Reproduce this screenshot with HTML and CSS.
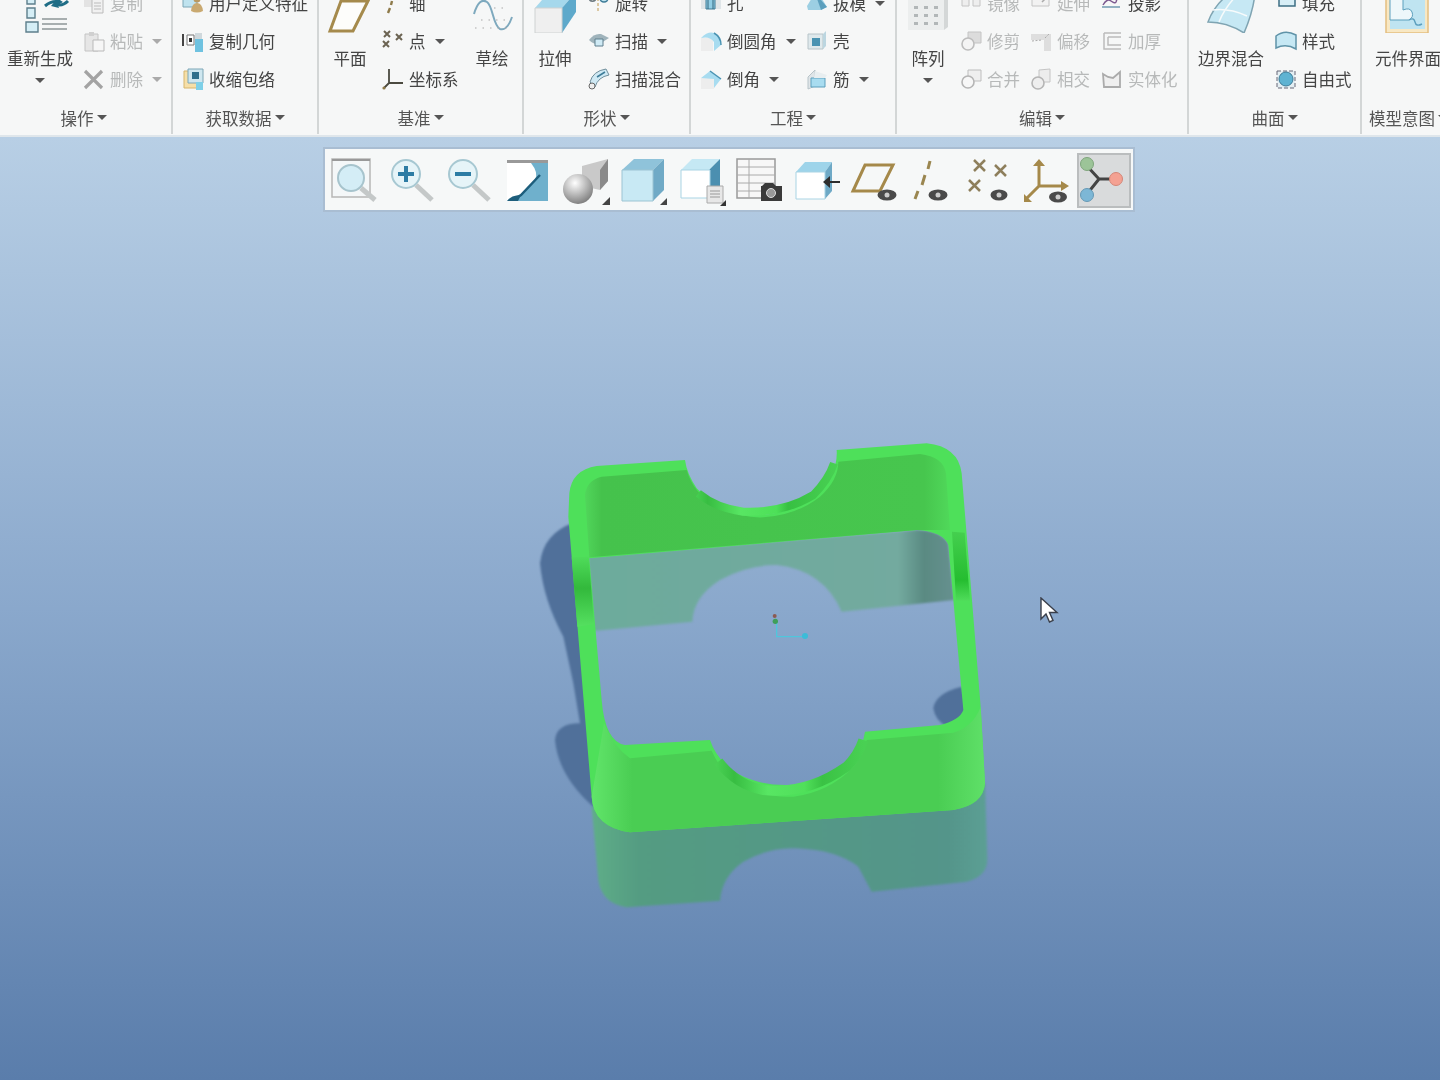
FILE: index.html
```html
<!DOCTYPE html>
<html lang="zh">
	<head>
		<meta charset="UTF-8">
		<title>Creo</title>
		<link rel="stylesheet" href="styles.css">
	</head>
	<body>
		<div class="ribbon">
			<!-- 操作 -->
			<section class="group g-ops">
				<div class="body">
					<div class="big">
						<svg class="big-icon" viewBox="0 0 66 47"><path d="M38 20q7-6 15-4M61 15q-6 6-13 3" fill="none" stroke="#1f6d86" stroke-width="3"/><path d="M48 11l8 5-7 4zM52 22l-8-2 5-6z" fill="#1f6d86"/><path d="M20 11h8v7h-8zM20 22h8v10h-8zM19 36h12v10H19z" fill="#d5eef6" stroke="#5d7f8c" stroke-width="1.400"/><path d="M35 33h25M35 38h25M35 43h25" stroke="#8d9698" stroke-width="1.600"/></svg>
						<span class="big-label">重新生成</span>
						<i class="arrow"></i>
					</div>
					<div class="col">
						<div class="item off"><svg class="ic" viewBox="0 0 22 22"><path d="M1 2h9v13H1z" fill="#e3e3e3"/><path d="M9 7h11v14H9z" fill="#f1f1f1" stroke="#bbb"/><path d="M11 11h7M11 14h7M11 17h7" stroke="#bbb"/></svg><span>复制</span></div>
						<div class="item off"><svg class="ic" viewBox="0 0 22 22"><path d="M2 4h13v17H2z" fill="#e6e6e6" stroke="#c4c4c4"/><path d="M6 2h5v4H6z" fill="#d0d0d0"/><path d="M10 10h11v11H10z" fill="#f6f6f6" stroke="#b9b9b9"/></svg><span>粘贴</span><i class="arrow"></i></div>
						<div class="item off"><svg class="ic" viewBox="0 0 22 22"><path d="M2 3l17 17M19 3L2 20" stroke="#a3a3a3" stroke-width="3.200"/></svg><span>删除</span><i class="arrow"></i></div>
					</div>
				</div>
				<div class="label">操作<i class="arrow"></i></div>
			</section>

			<!-- 获取数据 -->
			<section class="group g-data">
				<div class="body">
					<div class="col">
						<div class="item"><svg class="ic" viewBox="0 0 22 22"><path d="M1 6h14v9H1z" fill="#bfe3ef" stroke="#7da6b6"/><circle cx="15" cy="7" r="3.500" fill="#b99a62"/><path d="M9 19q1-8 6-8t6 8q-6 3-12 0z" fill="#c9a970"/></svg><span>用户定义特征</span></div>
						<div class="item"><svg class="ic" viewBox="0 0 22 22"><path d="M1 4v12" stroke="#444" stroke-width="2"/><path d="M5 5h7v10H5z" fill="#fff" stroke="#777"/><path d="M7 8h3v4H7z" fill="#333"/><path d="M13 3h7v6h-7z" fill="#cfd8dc"/><path d="M13 9h8v13h-8z" fill="#6fc2e0"/></svg><span>复制几何</span></div>
						<div class="item"><svg class="ic" viewBox="0 0 22 22"><path d="M2 3h14v17H2z" fill="#f6dfa8" stroke="#d6b56d"/><path d="M6 1h15v14H6z" fill="#cfe7f0" stroke="#7da6b6"/><path d="M10 4h7v7h-7z" fill="#2f6f8c"/><path d="M14 14h7v8h-7z" fill="#7ed0e8"/></svg><span>收缩包络</span></div>
					</div>
				</div>
				<div class="label">获取数据<i class="arrow"></i></div>
			</section>

			<!-- 基准 -->
			<section class="group g-datum">
				<div class="body">
					<div class="big">
						<svg class="big-icon" viewBox="0 0 62 47"><path d="M11 45L22 15H49L34 45z" fill="#fdfdfb" stroke="#a58a4c" stroke-width="3"/></svg>
						<span class="big-label">平面</span>
					</div>
					<div class="col">
						<div class="item"><svg class="ic" viewBox="0 0 22 22"><path d="M14 1l-2 5M10 9l-1 4M8 16l-2 5" stroke="#8e7a4a" stroke-width="2.400"/></svg><span>轴</span></div>
						<div class="item"><svg class="ic" viewBox="0 0 22 22"><path d="M2 1l6 6M8 1L2 7M14 4l6 6M20 4l-6 6M1 11l6 6M7 11l-6 6" stroke="#6b6352" stroke-width="2"/></svg><span>点</span><i class="arrow"></i></div>
						<div class="item"><svg class="ic" viewBox="0 0 22 22"><path d="M7 1v14M7 15h14M7 15l-5 5" stroke="#4b4a40" stroke-width="1.800" fill="none"/><circle cx="2" cy="20" r="1.600" fill="#8e7a4a"/></svg><span>坐标系</span></div>
					</div>
					<div class="big">
						<svg class="big-icon" viewBox="0 0 62 47"><path d="M13 28q5-17 13-12c6 4 6 24 13 27 6 2 10-6 12-12" fill="none" stroke="#7ea9be" stroke-width="2"/><path d="M14 42h36M20 34h28M33 22h12" stroke="#a9a9a9" stroke-width="1.200" stroke-dasharray="1.500 6"/></svg>
						<span class="big-label">草绘</span>
					</div>
				</div>
				<div class="label">基准<i class="arrow"></i></div>
			</section>

			<!-- 形状 -->
			<section class="group g-shape">
				<div class="body">
					<div class="big">
						<svg class="big-icon" viewBox="0 0 62 47"><path d="M11 22L25 6h27L38 22z" fill="#a5d8ec"/><path d="M38 22L52 6v20L38 47z" fill="#5ea9cb"/><path d="M11 22h27v25H11z" fill="#efefef" stroke="#cfd2d2"/></svg>
						<span class="big-label">拉伸</span>
					</div>
					<div class="col">
						<div class="item"><svg class="ic" viewBox="0 0 22 22"><circle cx="4.500" cy="6" r="3.200" fill="none" stroke="#6e7a80" stroke-width="1.600"/><circle cx="16" cy="6" r="4" fill="#bfe3ef" stroke="#3e7c98" stroke-width="1.600"/><path d="M10 1v18" stroke="#c09a50" stroke-dasharray="3 2"/></svg><span>旋转</span></div>
						<div class="item"><svg class="ic" viewBox="0 0 22 22"><path d="M1 10q5-7 12-6l8 4-8 5q-6 3-12-3z" fill="#9fb3bb"/><path d="M7 9h8v7H7z" fill="#cfeaf5" stroke="#5f7f8d"/></svg><span>扫描</span><i class="arrow"></i></div>
						<div class="item"><svg class="ic" viewBox="0 0 22 22"><path d="M2 14Q5 3 18 1l3 6Q10 9 7 19z" fill="#cfe9f4" stroke="#6f8d9a"/><circle cx="4" cy="18" r="3" fill="#eee" stroke="#666"/><path d="M9 9l8-5" stroke="#3e7c98" stroke-width="1.500"/></svg><span>扫描混合</span></div>
					</div>
				</div>
				<div class="label">形状<i class="arrow"></i></div>
			</section>

			<!-- 工程 -->
			<section class="group g-eng">
				<div class="body">
					<div class="col">
						<div class="item"><svg class="ic" viewBox="0 0 22 22"><path d="M1 3h20v14H1z" fill="#dfe5e8"/><path d="M6 3h9v14H6z" fill="#8fcde5" stroke="#3e7c98"/><path d="M8 3v14M13 3v14" stroke="#34667c"/></svg><span>孔</span></div>
						<div class="item"><svg class="ic" viewBox="0 0 22 22"><path d="M1 8h12v13H1z" fill="#ededed"/><path d="M1 8Q8 1 14 3q7 4 7 12l-7 6V12Q10 6 1 8z" fill="#a8dcf0"/><path d="M14 3q7 4 7 12" fill="none" stroke="#4a93b2" stroke-width="1.500"/></svg><span>倒圆角</span><i class="arrow"></i></div>
						<div class="item"><svg class="ic" viewBox="0 0 22 22"><path d="M1 10h13v11H1z" fill="#ededed"/><path d="M1 10l9-7 11 8-7 9v-9z" fill="#a8dcf0"/><path d="M10 3l11 8" stroke="#4a93b2" stroke-width="1.500"/></svg><span>倒角</span><i class="arrow"></i></div>
					</div>
					<div class="col">
						<div class="item"><svg class="ic" viewBox="0 0 22 22"><path d="M1 14L9 1l4 1 8 13-6 3H2z" fill="#9ccfe3"/><path d="M9 1l12 14-6 3z" fill="#5c9fbd"/></svg><span>拔模</span><i class="arrow"></i></div>
						<div class="item"><svg class="ic" viewBox="0 0 22 22"><path d="M2 4h15v15H2z" fill="#dfe9ec" stroke="#b8c4c9"/><path d="M6 8h8v8H6z" fill="#4a93b2"/><path d="M17 4l3-3v15l-3 3z" fill="#bcd6e0"/></svg><span>壳</span></div>
						<div class="item"><svg class="ic" viewBox="0 0 22 22"><path d="M2 9L9 2v16l-7 3z" fill="#dfe5e8" stroke="#b8c4c9"/><path d="M5 10h14v9H5z" fill="#a8dcf0" stroke="#5c9fbd"/><path d="M9 3l12 4-2 3H8z" fill="#e8eef0"/></svg><span>筋</span><i class="arrow"></i></div>
					</div>
				</div>
				<div class="label">工程<i class="arrow"></i></div>
			</section>

			<!-- 编辑 -->
			<section class="group g-edit">
				<div class="body">
					<div class="big">
						<svg class="big-icon" viewBox="0 0 62 47"><path d="M11 3h36v41H11z" fill="#eceeee"/><path d="M47 3l4-3v41l-4 3z" fill="#d4d7d7"/><path d="M17 20h4v3h-4zM27 20h4v3h-4zM37 20h4v3h-4zM17 28h4v3h-4zM27 28h4v3h-4zM37 28h4v3h-4zM17 36h4v3h-4zM27 36h4v3h-4zM37 36h4v3h-4z" fill="#b2b7b8"/></svg>
						<span class="big-label">阵列</span>
						<i class="arrow"></i>
					</div>
					<div class="col">
						<div class="item off"><svg class="ic" viewBox="0 0 22 22"><path d="M2 1h7v13H2zM13 1h7v13h-7z" fill="#eee" stroke="#c4c4c4"/></svg><span>镜像</span></div>
						<div class="item off"><svg class="ic" viewBox="0 0 22 22"><path d="M8 2h13v11H8z" fill="#dcdcdc" stroke="#c4c4c4"/><circle cx="8" cy="14" r="6" fill="#f4f4f4" stroke="#bdbdbd" stroke-width="1.600"/></svg><span>修剪</span></div>
						<div class="item off"><svg class="ic" viewBox="0 0 22 22"><path d="M8 2h13v11H8z" fill="#efefef" stroke="#bdbdbd"/><circle cx="8" cy="14" r="6" fill="#f7f7f7" stroke="#b5b5b5" stroke-width="1.600"/></svg><span>合并</span></div>
					</div>
					<div class="col">
						<div class="item off"><svg class="ic" viewBox="0 0 22 22"><path d="M2 1h17v13H2z" fill="#f2f2f2" stroke="#c4c4c4"/><path d="M8 7h7M12 4l3 3-3 3" fill="none" stroke="#aaa" stroke-width="1.500"/></svg><span>延伸</span></div>
						<div class="item off"><svg class="ic" viewBox="0 0 22 22"><path d="M1 4h20v17h-7V10H1z" fill="#dedede"/><path d="M2 11l10-1M15 8l4-4" stroke="#aaa" stroke-dasharray="2 1.500"/></svg><span>偏移</span></div>
						<div class="item off"><svg class="ic" viewBox="0 0 22 22"><path d="M9 2l11-1v13H9z" fill="#ededed" stroke="#c4c4c4"/><circle cx="8" cy="15" r="6" fill="#eee" stroke="#b5b5b5" stroke-width="1.600"/></svg><span>相交</span></div>
					</div>
					<div class="col">
						<div class="item"><svg class="ic" viewBox="0 0 22 22"><path d="M2 13q4-7 8-4t5 1l2-6" fill="none" stroke="#7d5a90" stroke-width="1.500"/><path d="M1 15h18" stroke="#7a9fb5" stroke-width="1.600"/></svg><span>投影</span></div>
						<div class="item off"><svg class="ic" viewBox="0 0 22 22"><path d="M3 3h17M3 3v16h17M7 7h13M7 7v8h13" fill="none" stroke="#bcbcbc" stroke-width="1.500"/></svg><span>加厚</span></div>
						<div class="item off"><svg class="ic" viewBox="0 0 22 22"><path d="M2 6l5 3 5 1 7-6v15H3z" fill="#efefef" stroke="#ababab" stroke-width="1.800"/></svg><span>实体化</span></div>
					</div>
				</div>
				<div class="label">编辑<i class="arrow"></i></div>
			</section>

			<!-- 曲面 -->
			<section class="group g-surf">
				<div class="body">
					<div class="big">
						<svg class="big-icon" viewBox="0 0 84 47"><path d="M19 36Q24 22 36 11 50 12 66 8 64 26 55 47 38 36 19 36z" fill="#c6e8f4" stroke="#7fa4b2" stroke-width="1.500"/><path d="M30 36q5-13 17-26M24 24q16-2 34 6" fill="none" stroke="#f7fbfc" stroke-width="1.500"/></svg>
						<span class="big-label">边界混合</span>
					</div>
					<div class="col">
						<div class="item"><svg class="ic" viewBox="0 0 22 22"><path d="M4 1h16v13H4z" fill="#d7eef6" stroke="#3e6f84" stroke-width="1.500"/></svg><span>填充</span></div>
						<div class="item"><svg class="ic" viewBox="0 0 22 22"><path d="M1 18V6Q10-1 21 5v14q-10-6-20-1z" fill="#c6e8f4" stroke="#5f93a8" stroke-width="1.500"/></svg><span>样式</span></div>
						<div class="item"><svg class="ic" viewBox="0 0 22 22"><path d="M2 3h18v17H2z" fill="#e4eef2" stroke="#667" stroke-dasharray="4 2"/><circle cx="11" cy="11" r="7" fill="#5fb3d2" stroke="#3e7c98"/></svg><span>自由式</span></div>
					</div>
				</div>
				<div class="label">曲面<i class="arrow"></i></div>
			</section>

			<!-- 模型意图 -->
			<section class="group g-intent">
				<div class="body">
					<div class="big">
						<svg class="big-icon" viewBox="0 0 92 47"><path d="M24 0h42v47H24z" fill="#f8e8c4" stroke="#e3bf80" stroke-width="1.500"/><path d="M28 0h35v43H28z" fill="#bfe4f1"/><path d="M28 0h13v24q7-3 9 2t-3 8H28z" fill="#eef7fa" stroke="#5c9fbd"/><path d="M47 34q5-3 6 2t7 2" fill="none" stroke="#5c9fbd" stroke-width="1.400"/></svg>
						<span class="big-label">元件界面</span>
					</div>
				</div>
				<div class="label">模型意图<i class="arrow"></i></div>
			</section>
		</div>

		<div class="viewport">
			<svg class="scene" viewBox="0 136 1440 944">
				<defs>
					<linearGradient id="frontWall" gradientUnits="userSpaceOnUse" x1="190" y1="0" x2="1365" y2="0">
						<stop offset="0" stop-color="#60e469"/><stop offset=".1" stop-color="#4acd53"/><stop offset=".88" stop-color="#4acd53"/><stop offset="1" stop-color="#5fe068"/>
					</linearGradient>
					<linearGradient id="topArc" gradientUnits="userSpaceOnUse" x1="490" y1="0" x2="920" y2="0">
						<stop offset="0" stop-color="#4ad455"/><stop offset=".1" stop-color="#38bd42"/><stop offset=".33" stop-color="#58e663"/><stop offset=".58" stop-color="#4de058"/><stop offset=".66" stop-color="#37c042"/><stop offset="1" stop-color="#49d053"/>
					</linearGradient>
					<linearGradient id="lowArc" gradientUnits="userSpaceOnUse" x1="560" y1="0" x2="1000" y2="0">
						<stop offset="0" stop-color="#49d053"/><stop offset=".12" stop-color="#38bd42"/><stop offset=".35" stop-color="#58e663"/><stop offset=".6" stop-color="#50e05a"/><stop offset=".72" stop-color="#3ac244"/><stop offset="1" stop-color="#49d053"/>
					</linearGradient>
					<linearGradient id="band" x1="0" y1="0" x2="0" y2="1">
						<stop offset="0" stop-color="#4fdc5a"/><stop offset=".45" stop-color="#33b93c"/><stop offset="1" stop-color="#55e060"/>
					</linearGradient>
					<linearGradient id="bandRight" x1="0" y1="0" x2="0" y2="1">
						<stop offset="0" stop-color="#45cf4f"/><stop offset=".7" stop-color="#25bd30"/><stop offset="1" stop-color="#4fdc5a"/>
					</linearGradient>
					<linearGradient id="mirrorBack" gradientUnits="userSpaceOnUse" x1="170" y1="0" x2="1270" y2="0">
						<stop offset="0" stop-color="#6dab9c"/><stop offset=".85" stop-color="#73aa9f"/><stop offset=".92" stop-color="#5a8a82"/><stop offset="1" stop-color="#66908f"/>
					</linearGradient>
					<linearGradient id="mirrorFloor" gradientUnits="userSpaceOnUse" x1="185" y1="0" x2="1370" y2="0">
						<stop offset="0" stop-color="#5fae88"/><stop offset=".12" stop-color="#549c82"/><stop offset=".9" stop-color="#54958a"/><stop offset="1" stop-color="#5c9f94"/>
					</linearGradient>
					<linearGradient id="backWall" gradientUnits="userSpaceOnUse" x1="160" y1="0" x2="1260" y2="0">
						<stop offset="0" stop-color="#52d85c"/><stop offset=".05" stop-color="#45c24c"/><stop offset=".93" stop-color="#47c64e"/><stop offset="1" stop-color="#50d85a"/>
					</linearGradient>
				</defs>
				<g transform="translate(530 430) scale(.33333)">
					<g class="soft">
						<path d="M130 278Q40 310 30 400 40 510 100 620L130 760 150 880Q80 880 75 930 85 1040 195 1135L170 800Z" fill="#50709a"/>
						<path d="M1295 770Q1215 790 1210 835 1215 870 1250 890L1315 850Z" fill="#50709a"/>
					</g>
					<path class="soft" d="M185 1130L205 1350Q215 1420 290 1432L570 1412Q575 1340 640 1295 720 1250 800 1255 920 1260 985 1310L1025 1385 1310 1355Q1370 1340 1372 1290L1365 1060Z" fill="url(#mirrorFloor)"/>
					<path class="soft" d="M175 380L190 603 487 575Q490 500 570 450 650 405 740 405 880 420 935 545L1272 510 1255 340Q1230 300 1160 300Z" fill="url(#mirrorBack)"/>

					<g class="edges">
						<path fill-rule="evenodd" fill="#4ee05a" d="M465 90L200 108Q125 120 118 190L115 260 185 1100Q190 1190 300 1207L1270 1140Q1360 1125 1365 1060L1352 830 1295 130Q1285 50 1190 40L920 60Q925 130 860 190 790 250 690 255 560 240 500 175 470 130 465 90ZM178 385L215 810Q225 935 285 945L540 930Q560 990 620 1030 690 1068 780 1065 870 1060 945 1015 995 975 1005 905L1230 885Q1290 870 1300 840L1255 345Q1240 305 1160 300Z"/>
						<path fill="url(#backWall)" d="M165 195Q170 150 215 140L470 120Q490 190 560 230 640 265 700 262 800 255 870 200 925 150 925 95L1170 72Q1240 80 1248 130L1260 300 1160 300 178 382Z"/>
						<path fill="url(#frontWall)" d="M222 880Q250 950 300 985L545 962Q570 1020 620 1060 700 1105 790 1100 900 1085 970 1010 1000 975 1010 930L1270 908Q1330 890 1352 830L1365 1060Q1360 1125 1270 1140L300 1207Q190 1190 185 1100Z"/>
						<path d="M505 190Q560 235 640 245 760 250 850 195 895 150 912 100" fill="none" stroke="url(#topArc)" stroke-width="24"/>
						<path d="M565 995Q620 1065 700 1080 830 1095 950 1010 985 975 1000 930" fill="none" stroke="url(#lowArc)" stroke-width="30"/>
						<path d="M125 382L176 380 192 582 142 590Z" fill="url(#band)"/>
						<path d="M1266 305L1304 308 1320 512 1278 512Z" fill="url(#bandRight)"/>
					</g>

					<path d="M740 575V620H825" fill="none" stroke="#4fc6dc" stroke-width="4"/>
					<circle cx="825" cy="618" r="9" fill="#3cbcd8"/>
					<circle cx="736" cy="574" r="8" fill="#3f9f58"/>
					<circle cx="734" cy="558" r="6" fill="#8b5a52"/>
				</g>
			</svg>

			<div class="toolbar">
				<div class="tool"><svg viewBox="0 0 50 50"><path d="M3 3h38v38H3z" fill="#f4f7f8" stroke="#b7b7b5" stroke-width="1.500"/><path d="M3 3h38v2H3z" fill="#999"/><path d="M32 32l14 12" stroke="#c4c8c8" stroke-width="5"/><circle cx="22" cy="22" r="13" fill="#d4edf6" stroke="#a7c4cd" stroke-width="2"/></svg></div>
				<div class="tool"><svg viewBox="0 0 50 50"><path d="M29 29l16 15" stroke="#c4c8c8" stroke-width="5"/><circle cx="19" cy="18" r="14" fill="#e6f4f8" stroke="#a7c8d2" stroke-width="2"/><path d="M19 10v16M11 18h16" stroke="#2d7ca4" stroke-width="4"/></svg></div>
				<div class="tool"><svg viewBox="0 0 50 50"><path d="M29 29l16 15" stroke="#c4c8c8" stroke-width="5"/><circle cx="19" cy="18" r="14" fill="#e6f4f8" stroke="#a7c8d2" stroke-width="2"/><path d="M11 18h16" stroke="#2d7ca4" stroke-width="4"/></svg></div>
				<div class="tool"><svg viewBox="0 0 50 50"><path d="M5 4h41v41H5z" fill="#6fb0cc"/><path d="M5 4h41v3H5z" fill="#999"/><path d="M5 7h24q8 10 4 17L14 43l-9 2z" fill="#fff"/><path d="M14 42l5-3 19-20" fill="none" stroke="#1d5e7c" stroke-width="2.500"/><path d="M5 45q4-6 14-6l-3 6z" fill="#1d5e7c"/></svg></div>
				<div class="tool"><svg viewBox="0 0 50 50"><defs><radialGradient id="ball" cx=".4" cy=".3" r=".8"><stop offset="0" stop-color="#fff"/><stop offset="1" stop-color="#6f6f6f"/></radialGradient></defs><path d="M22 10L48 3v22l-8 9-18-4z" fill="#c9c9c9"/><path d="M48 3v22l-8 9V14z" fill="#8a8a8a"/><circle cx="18" cy="33" r="15" fill="url(#ball)"/><path d="M42 49h8v-8z" fill="#444"/></svg></div>
				<div class="tool"><svg viewBox="0 0 50 50"><path d="M5 14L17 3h30L36 14z" fill="#8fc3da"/><path d="M36 14L47 3v31L36 45z" fill="#70aac6"/><path d="M5 14h31v31H5z" fill="#c8e9f4" stroke="#9cc4d3"/><path d="M43 49h7v-7z" fill="#444"/></svg></div>
				<div class="tool"><svg viewBox="0 0 50 50"><path d="M6 14L17 3h28L34 14z" fill="#c5e8f4"/><path d="M34 14L45 3v30L34 42z" fill="#4b8fb0"/><path d="M6 14h29v28H6z" fill="#fff" stroke="#a9d4e4"/><path d="M32 30h16v17H32z" fill="#e7e7e7" stroke="#aaa"/><path d="M35 35h10M35 38h10M35 41h10" stroke="#999"/><path d="M45 50h6v-6z" fill="#333"/></svg></div>
				<div class="tool"><svg viewBox="0 0 50 50"><path d="M4 3h38v39H4z" fill="#f7f7f7" stroke="#999" stroke-width="1.500"/><path d="M4 11h38M4 19h38M4 27h38M4 35h38M16 3v39" stroke="#aaa"/><path d="M29 30l3-3h8l3 3h6v15H28V30z" fill="#3a3a3a"/><circle cx="38" cy="37" r="4.500" fill="#999" stroke="#ddd"/></svg></div>
				<div class="tool"><svg viewBox="0 0 50 50"><path d="M5 16L14 6h27l-7 10z" fill="#9ed4ea"/><path d="M34 16l7-10v29l-7 8z" fill="#6ea9c6"/><path d="M5 16h29v27H5z" fill="#fff" stroke="#a9d4e4"/><path d="M49 26H38" stroke="#2e2e2e" stroke-width="2"/><path d="M39 20l-7 6 7 6z" fill="#2e2e2e"/></svg></div>
				<div class="tool"><svg viewBox="0 0 50 50"><path d="M5 35L17 9h28L32 35z" fill="none" stroke="#a5894a" stroke-width="3"/><ellipse cx="39" cy="39" rx="9.500" ry="5.500" fill="#4a4a4a"/><circle cx="39" cy="39" r="2.500" fill="#ccc"/></svg></div>
				<div class="tool"><svg viewBox="0 0 50 50"><path d="M24 5l-2 8M19 19l-3 10M12 35l-3 8" stroke="#9a8650" stroke-width="3"/><ellipse cx="32" cy="39" rx="9.500" ry="5.500" fill="#4a4a4a"/><circle cx="32" cy="39" r="2.500" fill="#ccc"/></svg></div>
				<div class="tool"><svg viewBox="0 0 50 50"><path d="M10 4l11 11M21 4L10 15M31 9l11 11M42 9L31 20M5 24l11 11M16 24L5 35" stroke="#8e7f5c" stroke-width="2.500"/><ellipse cx="35" cy="39" rx="8.500" ry="5.500" fill="#4a4a4a"/><circle cx="35" cy="39" r="2.500" fill="#ccc"/></svg></div>
				<div class="tool"><svg viewBox="0 0 50 50"><path d="M18 8v22M18 30h24M18 30L6 42" stroke="#a5894a" stroke-width="3" fill="none"/><path d="M12 10l6-7 6 7zM40 25l8 5-8 5zM3 38l0 8 8 0z" fill="#a5894a"/><ellipse cx="37" cy="41" rx="9" ry="5.500" fill="#4a4a4a"/><circle cx="37" cy="41" r="2.500" fill="#ccc"/></svg></div>
				<div class="tool active"><svg viewBox="0 0 50 50"><path d="M8 10l12 13-12 15M20 23h16" fill="none" stroke="#444" stroke-width="3"/><circle cx="8" cy="8" r="6.500" fill="#9cc498" stroke="#7fa57c"/><circle cx="8" cy="39" r="6.500" fill="#7db7d6" stroke="#6699b5"/><circle cx="37" cy="23" r="6.500" fill="#f4a192" stroke="#d48677"/></svg></div>
			</div>

			<svg class="cursor" viewBox="0 0 20 28"><path d="M2 1v21l5-5 3.500 8 3.500-1.500-3.500-8H18z" fill="#fff" stroke="#3a3f4a" stroke-width="1.400"/></svg>
		</div>
	</body>
</html>
```

FILE: styles.css
```css
* {margin: 0; padding: 0; box-sizing: border-box;}
html, body {width: 1440px; height: 1080px; overflow: hidden;}
body {
	font-family: "Noto Sans CJK SC", "Noto Sans", sans-serif;
	font-size: 16.5px;
	color: #444;
	background: #f6f7f7;
	display: flex;
	flex-direction: column;
}

/* ribbon */
.ribbon {
	height: 137px;
	flex-shrink: 0;
	display: flex;
	overflow: hidden;
	background: #f6f7f7;
	border-bottom: 2px solid #dfe6eb;
}
.group {
	flex-shrink: 0;
	height: 134px;
	display: flex;
	flex-direction: column;
	border-right: 2px solid #d3d6d6;
	filter: blur(.6px);
}
.body {
	display: grid;
	height: 114px;
	margin-top: -16px;
	flex-shrink: 0;
}
.label {
	flex: 1;
	display: flex;
	align-items: center;
	justify-content: center;
	gap: 3px;
	padding-top: 3px;
	color: #555;
}
.g-ops {width: 173px;}
.g-ops .body {grid-template-columns: 80px 1fr; column-gap: 3px;}
.g-ops .label {padding-right: 4px;}
.g-data {width: 146px;}
.g-data .body {padding-left: 9px;}
.g-datum {width: 205px;}
.g-datum .body {grid-template-columns: 62px 78px 62px; column-gap: 1px;}
.g-shape {width: 167px;}
.g-shape .body {grid-template-columns: 62px 1fr; column-gap: 2px;}
.g-eng {width: 206px;}
.g-eng .body {grid-template-columns: 106px 1fr; padding-left: 9px;}
.g-edit {width: 292px;}
.g-edit .body {grid-template-columns: 62px 71px 71px 1fr;}
.g-edit .col:nth-child(2) {margin-left: 1px;}
.g-surf {width: 173px;}
.g-surf .body {grid-template-columns: 84px 1fr; column-gap: 2px;}
.g-intent {width: 92px; border-right: none;}
.g-intent .label {justify-content: flex-start; padding-left: 7px;}

.big {
	display: flex;
	flex-direction: column;
	align-items: center;
	min-width: 0;
	padding-top: 2px;
}
.big-icon {width: 100%; height: 47px; flex-shrink: 0;}
.big-label {margin-top: 13px; line-height: 24px; white-space: nowrap;}
.big .arrow {margin-top: 8px;}

.col {display: grid; grid-auto-rows: 38px;}
.item {display: flex; align-items: center; gap: 5px; white-space: nowrap;}
.item .arrow {margin-left: 4px;}
.ic {width: 22px; height: 22px; flex-shrink: 0;}
.off {color: #b7b9b9;}
.off .arrow {border-top-color: #aaa;}
.arrow {
	display: block;
	width: 0;
	height: 0;
	flex-shrink: 0;
	border-left: 5px solid transparent;
	border-right: 5px solid transparent;
	border-top: 5px solid #555;
}

/* graphics area */
.viewport {
	position: relative;
	flex: 1;
	background: linear-gradient(#b8cfe5 0, #8aa8cc 50%, #5a7dab 100%);
	overflow: hidden;
}
.scene {position: absolute; left: 0; top: -1px; width: 1440px; height: 944px;}
.soft {filter: blur(3px);}
.edges {filter: blur(.8px);}

.toolbar {
	position: absolute;
	left: 323px;
	top: 10px;
	width: 812px;
	height: 65px;
	display: flex;
	gap: 3.7px;
	padding: 4px 2px 1px 2px;
	background: #f6f8f8;
	border: 2px solid #a9bdd2;
	filter: blur(.5px);
}
.tool {
	width: 54px;
	height: 55px;
	flex-shrink: 0;
	display: flex;
	align-items: center;
	justify-content: center;
	border: 2px solid transparent;
}
.tool svg {width: 50px; height: 50px; overflow: visible;}
.active {background: #d9dbdc; border-color: #babdbe;}

.cursor {
	position: absolute;
	left: 1039px;
	top: 460px;
	width: 20px;
	height: 28px;
}
```
